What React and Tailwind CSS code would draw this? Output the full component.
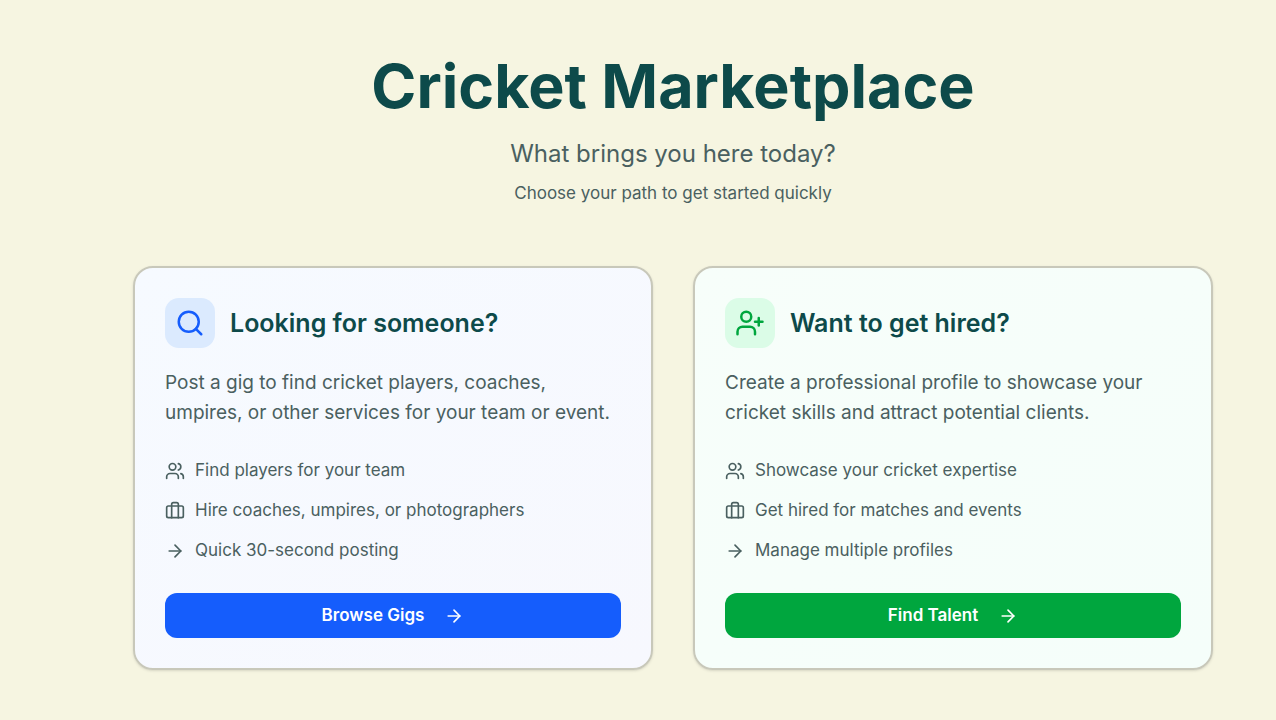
import { ArrowRight, Briefcase, Search, UserPlus, Users } from "lucide-react";

const PATHS = [
  {
    id: "browse",
    title: "Looking for someone?",
    description:
      "Post a gig to find cricket players, coaches, umpires, or other services for your team or event.",
    features: [
      "Find players for your team",
      "Hire coaches, umpires, or photographers",
      "Quick 30-second posting",
    ],
    action: "Browse Gigs",
    icon: Search,
    card: "from-[#f6faff] to-[#f7f8fe]",
    iconBox: "bg-blue-100 text-blue-600",
    button: "bg-blue-600 hover:bg-blue-700",
  },
  {
    id: "talent",
    title: "Want to get hired?",
    description:
      "Create a professional profile to showcase your cricket skills and attract potential clients.",
    features: [
      "Showcase your cricket expertise",
      "Get hired for matches and events",
      "Manage multiple profiles",
    ],
    action: "Find Talent",
    icon: UserPlus,
    card: "from-[#f7fefa] to-[#f5fefa]",
    iconBox: "bg-green-100 text-green-600",
    button: "bg-green-600 hover:bg-green-700",
  },
];

const FEATURE_ICONS = [Users, Briefcase, ArrowRight];

const PathCard = ({ path }) => {
  const Icon = path.icon;

  return (
    <section
      className={`flex flex-col rounded-[20px] border-2 border-[#c8c8ba] bg-linear-to-br p-[30px] shadow-sm ${path.card}`}
    >
      {/* Heading */}
      <div className="mb-5 flex items-center gap-[15px]">
        <div className={`rounded-[14px] p-[10px] ${path.iconBox}`}>
          <Icon size={30} aria-hidden="true" />
        </div>
        <h2 className="text-[25px] leading-8 font-semibold text-[#0d4a4a]">{path.title}</h2>
      </div>

      <p className="mb-[30px] text-[19px] leading-[30px]">{path.description}</p>

      {/* Features */}
      <ul className="mb-[30px] space-y-[15px]">
        {path.features.map((feature, i) => {
          const FeatureIcon = FEATURE_ICONS[i];
          return (
            <li key={feature} className="flex items-center gap-[10px] text-[17px] leading-[25px]">
              <FeatureIcon size={20} className="shrink-0" aria-hidden="true" />
              <span>{feature}</span>
            </li>
          );
        })}
      </ul>

      <button
        type="button"
        className={`mt-auto flex h-[45px] w-full items-center justify-center gap-5 rounded-xl text-[17px] font-semibold text-white ${path.button}`}
      >
        {path.action}
        <ArrowRight size={20} aria-hidden="true" />
      </button>
    </section>
  );
};

export default function App() {
  return (
    <main className="min-h-screen bg-[#f6f5e1] pt-14 pr-[30px] pb-[50px] pl-[100px] font-['Inter',sans-serif] text-[#4a6060]">
      <div className="mx-auto max-w-[1080px]">
        {/* Intro */}
        <header className="mb-[60px] text-center">
          <h1 className="mb-5 text-[61px] leading-[60px] font-bold text-[#0d4a4a]">
            Cricket Marketplace
          </h1>
          <p className="mb-[10px] text-[24px] leading-[35px]">What brings you here today?</p>
          <p className="text-[17px] leading-[25px]">Choose your path to get started quickly</p>
        </header>

        <div className="grid grid-cols-2 gap-10">
          {PATHS.map((path) => (
            <PathCard key={path.id} path={path} />
          ))}
        </div>
      </div>
    </main>
  );
}
